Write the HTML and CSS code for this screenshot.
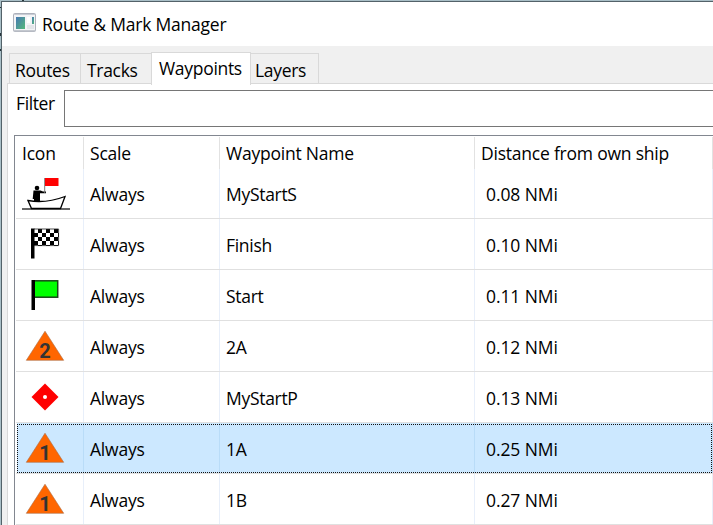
FILE: index.html
```
<!DOCTYPE html>
<html lang="en">
<head>
<meta charset="utf-8">
<title>Route &amp; Mark Manager</title>
<link rel="stylesheet" href="styles.css">
</head>
<body>
<svg width="0" height="0" class="defs">
  <defs>
    <pattern id="checks" x="3" y="1" width="8" height="8" patternUnits="userSpaceOnUse">
      <rect width="8" height="8" fill="#000"/><path d="M0 0h4v4H0zM4 4h4v4H4z" fill="#fff"/>
    </pattern>
    <linearGradient id="pane" x1="0" y1="0" x2="1" y2="1"><stop offset="0" stop-color="#4779b4"/><stop offset="1" stop-color="#55b97a"/></linearGradient>
  </defs>
</svg>
<div class="desktop">
  <div class="edge">
    <svg width="24" height="525" viewBox="0 0 24 525"><path d="M22 0h2v1h-2zM0 7h1v1H0zM0 33h1v3H0zM0 49h1v2H0z" fill="#26343a"/></svg>
  </div>
  <div class="window">
    <header class="titlebar">
      <svg class="app-icon" width="23" height="19" viewBox="0 0 23 19"><rect x=".5" y=".5" width="22" height="18" rx="1" fill="#f3f4f6" stroke="#adb1bb"/><path d="M1 1.5h21" stroke="#c9cdd5"/><path d="M1 17.8h21" stroke="#bfc3cb" stroke-width="1.4"/><rect x="3" y="4" width="9" height="12" fill="url(#pane)"/><rect x="14" y="4" width="3" height="6" fill="#fff"/><rect x="14" y="12" width="7" height="4" fill="#e3e5e9"/><rect x="19" y="4" width="2" height="7" fill="url(#pane)"/></svg>
      <h1 class="title">Route &amp; Mark Manager</h1>
    </header>
    <nav class="tabs">
      <span class="tab routes">Routes</span><span class="tab tracks">Tracks</span><span class="tab active">Waypoints</span><span class="tab layers">Layers</span>
    </nav>
    <main class="page">
      <label class="filter"><span class="filter-label">Filter</span><input class="filter-input" type="text"></label>
      <div class="list">
        <div class="row head"><span class="cell h-icon">Icon</span><span class="cell h-scale">Scale</span><span class="cell h-name">Waypoint Name</span><span class="cell h-dist">Distance from own ship</span></div>
        <div class="row first">
          <span class="cell icon"><svg width="48" height="34" viewBox="0 0 48 34"><path d="M0 31h48" stroke="#666" stroke-width="1.8"/><path d="M6 22.500C17 24.500 31 23 43 18.500L38.500 30.500H9.500z" fill="#fff" stroke="#000" stroke-width="1.3"/><circle cx="15" cy="10" r="2.300" fill="#000"/><path d="M11.500 12.500h7l2.500 1h3v1.800h-6v7.700h-6v-2h-1.300z" fill="#000"/><path d="M22.700 0v15" stroke="#777"/><rect x="23" width="13.500" height="8" fill="#f00"/></svg></span>
          <span class="cell">Always</span><span class="cell">MyStartS</span><span class="cell">0.08 NMi</span></div>
        <div class="row">
          <span class="cell icon"><svg width="48" height="34" viewBox="0 0 48 34"><g transform="translate(9 1)"><rect x="3" y="1" width="25" height="17" fill="url(#checks)"/><path d="M3 1h24.600v16.600H3" fill="none" stroke="#222" stroke-width=".8"/><rect y=".5" width="3.500" height="30"/></g></svg></span>
          <span class="cell">Always</span><span class="cell">Finish</span><span class="cell">0.10 NMi</span></div>
        <div class="row">
          <span class="cell icon"><svg width="48" height="34" viewBox="0 0 48 34"><g transform="translate(9 2)"><rect x="2" y=".8" width="24.700" height="16.400" fill="#0f0" stroke="#174517" stroke-width="1.500"/><rect x=".5" width="3.500" height="30"/></g></svg></span>
          <span class="cell">Always</span><span class="cell">Start</span><span class="cell">0.11 NMi</span></div>
        <div class="row">
          <span class="cell icon"><svg width="48" height="34" viewBox="0 0 48 34"><path d="M23 2.200L41.700 31.300H4.300z" fill="#f60" stroke="#a96b45" stroke-width=".6"/><text class="mark" x="23" y="28.500">2</text></svg></span>
          <span class="cell">Always</span><span class="cell">2A</span><span class="cell">0.12 NMi</span></div>
        <div class="row">
          <span class="cell icon"><svg width="48" height="34" viewBox="0 0 48 34"><path d="M23 3.500L36.500 17 23 30.500 9.500 17z" fill="#f00"/><circle cx="23" cy="17" r="2" fill="#fff"/></svg></span>
          <span class="cell">Always</span><span class="cell">MyStartP</span><span class="cell">0.13 NMi</span></div>
        <div class="row selected">
          <span class="cell icon"><svg width="48" height="34" viewBox="0 0 48 34"><path d="M23 2.200L41.700 31.300H4.300z" fill="#f60" stroke="#a96b45" stroke-width=".6"/><text class="mark" x="23" y="28.500">1</text></svg></span>
          <span class="cell">Always</span><span class="cell">1A</span><span class="cell">0.25 NMi</span>
          <svg class="focus" width="696" height="49"><path d="M0 .5H695M0 48.500H695M.5 0V49M694.500 0V49" fill="none" stroke="#111" stroke-dasharray="1 1"/></svg></div>
        <div class="row">
          <span class="cell icon"><svg width="48" height="34" viewBox="0 0 48 34"><path d="M23 2.200L41.700 31.300H4.300z" fill="#f60" stroke="#a96b45" stroke-width=".6"/><text class="mark" x="23" y="28.500">1</text></svg></span>
          <span class="cell">Always</span><span class="cell">1B</span><span class="cell">0.27 NMi</span></div>
      </div>
    </main>
  </div>
</div>
</body>
</html>
```
FILE: styles.css
```
* { box-sizing: border-box; }
body { margin: 0; overflow: hidden; font: 17.5px/24px "Open Sans", "Noto Sans", sans-serif; color: #000; letter-spacing: -.22px; }
.defs { position: absolute; }
.desktop { width: 713px; height: 525px; padding: 1px 0 0 1px; background: #a9bfc7; overflow: hidden; }
.edge { position: absolute; top: 0; left: 0; }
.edge svg { display: block; }
.window { position: relative; width: 730px; height: 530px; border: 1px solid #536269; border-right: 0; background: #f0f0f0; }
.titlebar { display: flex; height: 44px; padding: 11px 0 0 11px; background: #fff; }
.app-icon { flex: none; }
.title { margin: -1px 0 0 6px; font: inherit; white-space: nowrap; }
.tabs { display: flex; align-items: flex-end; height: 38px; padding-left: 7px; letter-spacing: -.3px; }
.tab { height: 31px; border: 1px solid #d9d9d9; border-bottom: 0; border-left: 0; padding: 4px 0 0 6px; white-space: nowrap; }
.routes { width: 72px; border-left: 1px solid #d9d9d9; padding-left: 5px; }
.tracks { width: 70px; border-right: 0; }
.active { position: relative; z-index: 1; width: 100px; height: 33px; margin-bottom: -1px; border-left: 1px solid #d9d9d9; background: #fff; padding: 3px 0 0 7px; }
.layers { width: 68px; padding-left: 4px; }
.page { height: 450px; margin: -1px 0 0 5px; border: solid #d9d9d9; border-width: 1px 0 0 1px; background: #fff; padding: 6px 0 0 6px; }
.filter { display: flex; height: 37px; }
.filter-label { width: 50px; padding: 1px 0 0 2px; letter-spacing: -.4px; }
.filter-input { width: 670px; height: 37px; border: 1px solid #767676; background: #fff; }
.list { width: 720px; margin-top: 8px; border: 1px solid #828790; border-right: 0; }
.row { position: relative; display: grid; grid-template-columns: 69px 136px 255px 238px; width: 698px; height: 51px; }
.row::after { content: ""; position: absolute; left: 1px; right: 0; bottom: 0; height: 1px; background: #e0e0e0; }
.cell { border-right: 1px solid #e8effa; padding: 14px 0 0 6px; white-space: nowrap; }
.cell:nth-child(3) { letter-spacing: -.3px; }
.cell:nth-child(4) { padding-left: 11px; letter-spacing: -.1px; }
.icon { padding: 8px 0 0 7px; }
.icon svg { display: block; }
.head { height: 32px; margin-top: 1px; }
.head::after { display: none; }
.head .cell { padding-top: 4px; border-color: #e2e2e2; letter-spacing: -.22px; }
.head .h-icon { padding-left: 7px; }
.head .h-dist { padding-left: 6px; }
.first { height: 50px; }
.first .cell { padding-top: 13px; }
.first .icon { padding-top: 9px; }
.selected { background: linear-gradient(90deg, #fff 2px, #cce8ff 2px); }
.selected .cell { border-color: #b9dcf8; }
.focus { position: absolute; left: 2px; top: 1px; }
.mark { font: bold 20px Roboto, sans-serif; letter-spacing: 0; text-anchor: middle; fill: #333; }
```
